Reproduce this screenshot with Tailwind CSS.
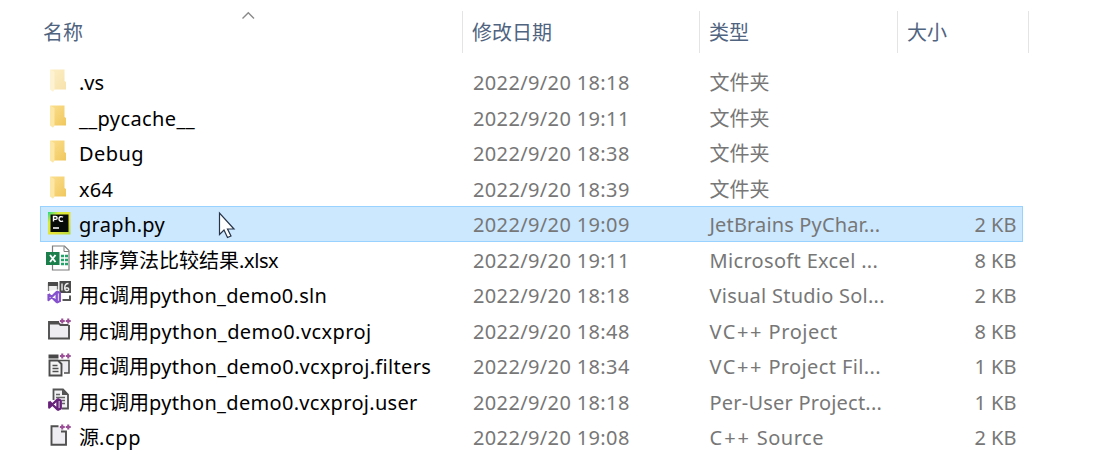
<!DOCTYPE html>
<html lang="zh-CN">
<head>
<meta charset="utf-8">
<title>文件资源管理器</title>
<script src="https://cdn.jsdelivr.net/npm/@tailwindcss/browser@4"></script>
</head>
<body class="bg-white">
<svg class="absolute w-0 h-0">
  <defs>
    <linearGradient id="gf" x1="0" y1="0" x2="1" y2="1"><stop offset="0" stop-color="#fbdf8e"/><stop offset="1" stop-color="#f0c75d"/></linearGradient>
    <linearGradient id="gp" x1="0" y1="0" x2="1" y2="1"><stop offset="0" stop-color="#21d789"/><stop offset=".25" stop-color="#d8ee3c"/><stop offset=".6" stop-color="#e6e23a"/><stop offset="1" stop-color="#b5d83c"/></linearGradient>
    <symbol id="folder" viewBox="0 0 24 24"><path d="M2.500 1.500h14v11.500l1.500 1v7.500H3z" fill="url(#gf)"/><path d="M2 1.500l4.500 2.500v17.500l-1.500 2.200L2 21.500z" fill="#fde7a6"/></symbol>
    <symbol id="plus" viewBox="0 0 11 6"><path d="M0 3h5M2.500 .5v5M6 3h5M8.500 .5v5" stroke="#9b4f96" stroke-width="2.100" fill="none"/></symbol>
    <symbol id="vs" viewBox="0 0 14 15"><path d="M1.300 4.500v6l8.200-8v10L1.300 4.500M9.500 2l3.200 1.500v8L9.500 13" fill="none" stroke="currentColor" stroke-width="2.400" stroke-linejoin="round"/></symbol>
  </defs>
</svg>
<main class="w-[1101px] h-[466px] overflow-hidden relative whitespace-nowrap text-xl leading-[37.5px] text-[#777777] font-['Noto_Sans','Noto_Sans_CJK_SC',sans-serif]">
  <header class="flex pt-[11px] mb-[11.2px] text-[#50647f] leading-[44px]">
    <div class="w-[463px] h-[42px] pl-[43px] border-r border-[#e4e4e4]">名称</div>
    <div class="w-[237px] h-[42px] pl-[9px] border-r border-[#e4e4e4]">修改日期</div>
    <div class="w-[198px] h-[42px] pl-[9px] border-r border-[#e4e4e4]">类型</div>
    <div class="w-[131px] h-[42px] pl-[9px] border-r border-[#e4e4e4]">大小</div>
  </header>
  <svg class="absolute left-[241px] top-[10px] w-[14px] h-[10px]" viewBox="0 0 14 10" fill="none" stroke="#8a8a8a" stroke-width="1.400"><path d="M1.500 8.500L7.300 2.700L13 8.500"/></svg>

  <section class="ml-[40px] w-[983px]">
    <div class="flex h-[35.5px]">
      <svg class="w-6 h-6 ml-2 mt-1 mr-[7px] opacity-50"><use href="#folder"/></svg>
      <div class="w-[394px] text-black">.vs</div><div class="w-[236.5px] tracking-[.36px]">2022/9/20 18:18</div><div class="flex-1">文件夹</div>
    </div>
    <div class="flex h-[35.5px]">
      <svg class="w-6 h-6 ml-2 mt-1 mr-[7px]"><use href="#folder"/></svg>
      <div class="w-[394px] text-black tracking-[.4px]">__pycache__</div><div class="w-[236.5px] tracking-[.36px]">2022/9/20 19:11</div><div class="flex-1">文件夹</div>
    </div>
    <div class="flex h-[35.5px]">
      <svg class="w-6 h-6 ml-2 mt-1 mr-[7px]"><use href="#folder"/></svg>
      <div class="w-[394px] text-black tracking-[.4px]">Debug</div><div class="w-[236.5px] tracking-[.36px]">2022/9/20 18:38</div><div class="flex-1">文件夹</div>
    </div>
    <div class="flex h-[35.5px]">
      <svg class="w-6 h-6 ml-2 mt-1 mr-[7px]"><use href="#folder"/></svg>
      <div class="w-[394px] text-black tracking-[.2px]">x64</div><div class="w-[236.5px] tracking-[.36px]">2022/9/20 18:39</div><div class="flex-1">文件夹</div>
    </div>
    <div class="flex h-[35.5px] bg-[#cce8ff] outline outline-[#99d1ff] -outline-offset-1">
      <svg class="w-6 h-6 ml-2 mt-1.5 mr-[7px]" viewBox="0 0 24 24"><path d="M0 0h22.500v22.500H0z" fill="url(#gp)"/><path d="M2.500 2.500h18v17.500h-18z" fill="#080c08"/><path d="M5.500 9.500V4.500h2.200a1.400 1.400 0 010 2.900H5.500M15 5.300c-1.800-1.400-4-.6-4 1.700s2.300 3.100 4 1.700M5 16h6" fill="none" stroke="#fff" stroke-width="1.400"/></svg>
      <div class="w-[394px] text-black tracking-[.32px]">graph.py</div><div class="w-[236.5px] tracking-[.36px]">2022/9/20 19:09</div><div class="flex-1 tracking-[.15px]">JetBrains PyChar...</div><div class="pr-[6.5px]">2 KB</div>
    </div>
    <div class="flex h-[35.5px]">
      <svg class="w-6 h-[26px] ml-1.5 mt-[3px] mr-[9px]" viewBox="0 0 24 26"><path d="M6.500 1h12l4.500 4.500v19.500H6.500z" fill="#fff" stroke="#7c7c7c" stroke-width="1.200"/><path d="M18 1.500v5h5" fill="none" stroke="#7c7c7c"/><path d="M15 11h3M19 11h3M15 15h3M19 15h3M15 19h3M19 19h3" stroke="#24a46b" stroke-width="2.500"/><path d="M0 7h13.500v13H0z" fill="#1b7f4b"/><path d="M4 10l5.500 7M9.500 10L4 17" stroke="#fff" stroke-width="1.900"/></svg>
      <div class="w-[394px] text-black">排序算法比较结果<span class="tracking-[-.4px]">.xlsx</span></div><div class="w-[236.5px] tracking-[.36px]">2022/9/20 19:11</div><div class="flex-1 tracking-[.33px]">Microsoft Excel ...</div><div class="pr-[6.5px]">8 KB</div>
    </div>
    <div class="flex h-[35.5px]">
      <svg class="w-[26px] h-7 ml-1.5 mt-1 mr-[7px]" viewBox="0 0 26 28"><path d="M2.500 10V2.500h9v6" fill="#f0f0f0" stroke="#777" stroke-width="1.300"/><path d="M2 1h10v4H2zM13.500 0H25v12H13.500z" fill="#4b4b4b"/><path d="M16 2.500v7M22.500 2.500c-2.500 0-3.800 1.500-3.800 4.500 0 4 4.500 3 4 1-.4-1.600-3-1.600-4 0" fill="none" stroke="#eee" stroke-width="1.400"/><path d="M24 14.500v4.500H16.500" fill="none" stroke="#555" stroke-width="2"/><svg x="1.200" y="8.500" width="14" height="15" color="#8551cc"><use href="#vs"/></svg></svg>
      <div class="w-[394px] text-black">用<span class="tracking-[.5px]">c</span>调用<span class="tracking-[.3px]">python_demo0.sln</span></div><div class="w-[236.5px] tracking-[.36px]">2022/9/20 18:18</div><div class="flex-1 tracking-[.25px]">Visual Studio Sol...</div><div class="pr-[6.5px]">2 KB</div>
    </div>
    <div class="flex h-[35.5px]">
      <svg class="w-[26px] h-6 ml-1.5 mt-[5px] mr-[7px]" viewBox="0 0 26 24"><path d="M3 4v16.500h20V7" fill="#eeeef2"/><path d="M13 4H3v16.500h20V7M3 5.500h10l1.500 1.500h8" fill="none" stroke="#505050" stroke-width="1.900"/><use href="#plus" x="13.500" y="0" width="11.500" height="6"/></svg>
      <div class="w-[394px] text-black">用<span class="tracking-[.5px]">c</span>调用<span class="tracking-[.43px]">python_demo0.vcxproj</span></div><div class="w-[236.5px] tracking-[.36px]">2022/9/20 18:48</div><div class="flex-1 tracking-[.55px]"><span class="tracking-[1.5px]">VC++</span> Project</div><div class="pr-[6.5px]">8 KB</div>
    </div>
    <div class="flex h-[35.5px]">
      <svg class="w-[26px] h-6 ml-1.5 mt-[5px] mr-[7px]" viewBox="0 0 26 24"><path d="M2.500 1.500h10v4h-10z" fill="#484848"/><path d="M13 7.500h10v12.500H18" fill="#eeeef2" stroke="#505050" stroke-width="1.600"/><path d="M3.500 7.500h8.500l3.500 3.500v11.500H3.500z" fill="#f4f4f4" stroke="#4c4c4c" stroke-width="1.900"/><path d="M6.500 12.500h5M6.500 15.500h6M6.500 18.500h6" stroke="#505050" stroke-width="1.500"/><use href="#plus" x="13.500" y="0" width="11.500" height="6"/></svg>
      <div class="w-[394px] text-black">用<span class="tracking-[.5px]">c</span>调用<span class="tracking-[.33px]">python_demo0.vcxproj.filters</span></div><div class="w-[236.5px] tracking-[.36px]">2022/9/20 18:34</div><div class="flex-1 tracking-[.37px]"><span class="tracking-[1.5px]">VC++</span> Project Fil...</div><div class="pr-[6.5px]">1 KB</div>
    </div>
    <div class="flex h-[35.5px]">
      <svg class="w-[26px] h-7 ml-1.5 mt-1 mr-[7px]" viewBox="0 0 26 28"><path d="M7.500 12V1.500h9.500l5 5v14H16" fill="#f2f2f5" stroke="#555" stroke-width="1.800"/><path d="M16 1.500v5.500h6z" fill="#555"/><path d="M10 6.500h4M10 9.500h9M16 12.500h3M16 15.500h3" stroke="#666" stroke-width="1.400"/><svg x="2" y="9" width="14" height="15" color="#68217a"><use href="#vs"/></svg></svg>
      <div class="w-[394px] text-black">用<span class="tracking-[.5px]">c</span>调用<span class="tracking-[.31px]">python_demo0.vcxproj.user</span></div><div class="w-[236.5px] tracking-[.36px]">2022/9/20 18:18</div><div class="flex-1 tracking-[.22px]">Per-User Project...</div><div class="pr-[6.5px]">1 KB</div>
    </div>
    <div class="flex h-[35.5px]">
      <svg class="w-[26px] h-6 ml-1.5 mt-[5px] mr-[7px]" viewBox="0 0 26 24"><path d="M5.500 3h8l6.500 5v12.500H5.500z" fill="#eeeef2"/><path d="M12.500 2.200H5.500v18.500h14.500V7.500H15" fill="none" stroke="#505050" stroke-width="1.900"/><use href="#plus" x="13.500" y="0" width="11.500" height="6"/></svg>
      <div class="w-[394px] text-black">源<span class="tracking-[.7px]">.cpp</span></div><div class="w-[236.5px] tracking-[.36px]">2022/9/20 19:08</div><div class="flex-1 tracking-[.5px]"><span class="tracking-[2px]">C++</span> Source</div><div class="pr-[6.5px]">2 KB</div>
    </div>
  </section>
  <svg class="absolute left-[218px] top-[211px] w-[18px] h-[28px]" viewBox="0 0 18 28"><path d="M1.500 2v21.500l4.500-4.500 3.500 7.500 3.500-1.500-3.500-7h6.500z" fill="#fff" stroke="#26344a" stroke-width="1.200"/></svg>
</main>
</body>
</html>
